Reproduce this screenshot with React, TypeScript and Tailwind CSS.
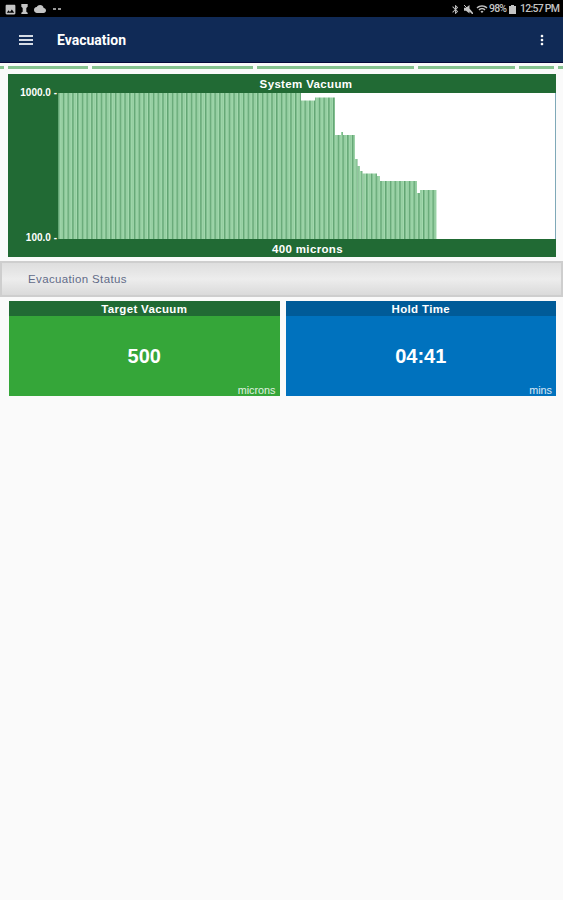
import { MdImage, MdCloud, MdBluetooth, MdWifi, MdMoreVert } from "react-icons/md";

type Step = { from: number; to: number; top: number };

// plot coordinates: 498 x 146, origin at the 1000 micron line
const STEPS: Step[] = [
  { from: 0, to: 243, top: 0 },
  { from: 243, to: 257, top: 7.5 },
  { from: 257, to: 277, top: 4.5 },
  { from: 277, to: 283, top: 42 },
  { from: 283, to: 285, top: 39 },
  { from: 285, to: 297, top: 42 },
  { from: 297, to: 299.5, top: 66 },
  { from: 299.5, to: 302, top: 73 },
  { from: 302, to: 304.5, top: 78 },
  { from: 304.5, to: 319, top: 80.5 },
  { from: 319, to: 322, top: 83 },
  { from: 322, to: 359, top: 88 },
  { from: 359, to: 362, top: 100 },
  { from: 362, to: 378.5, top: 97 },
];

const StatusBar = () => (
  <div className="flex h-[17px] items-center justify-between bg-black pt-px pr-[5px] pl-1 text-[#c4c4c4]">
    <div className="flex items-center gap-[2px]">
      <MdImage className="size-[13px]" />
      <svg className="h-[10px] w-[11px]" viewBox="0 0 11 11" fill="currentColor">
        <path d="M2 0h7v3L7.500 4.500v4l1.500 1V11H2V9.500l1.500-1v-4L2 3z" />
      </svg>
      <MdCloud className="ml-[2px] size-[12px]" />
      <span className="ml-[5px] flex gap-[2px]">
        <i className="h-[2px] w-[3px] bg-[#999]" />
        <i className="h-[2px] w-[3px] bg-[#999]" />
      </span>
    </div>
    <div className="flex items-center font-[Roboto,sans-serif] text-[10.5px] leading-none font-medium">
      <MdBluetooth className="size-[11px]" />
      <svg className="ml-[3px] size-[9px]" viewBox="0 0 9 9" fill="currentColor">
        <path d="M0 2.800h2L5.500 0v3.600L9 7.800 8 9 5.500 6.600V8.500L2 5.800H0z" />
        <path d="M0 0l9 9" stroke="currentColor" />
      </svg>
      <MdWifi className="ml-[3px] size-[12px]" />
      <span className="ml-px w-[18px] tracking-[-0.8px]">98%</span>
      <svg className="ml-[2px] h-[9px] w-[7px]" viewBox="0 0 7 9" fill="currentColor">
        <path d="M2 0h3v1h2v8H0V1h2z" />
      </svg>
      <span className="ml-[4px] w-[38px] tracking-[-0.75px] whitespace-nowrap">12:57 PM</span>
    </div>
  </div>
);

const AppBar = () => (
  <header className="flex h-[46px] items-center border-b border-[#07093c] bg-[#102a56] text-white">
    <div className="ml-[19px] flex w-[14px] flex-col gap-[2px]">
      <span className="h-[2px] bg-[#d5dbe5]" />
      <span className="h-[2px] bg-[#d5dbe5]" />
      <span className="h-[2px] bg-[#d5dbe5]" />
    </div>
    <h1 className="ml-[24px] flex-1 pt-px font-[Roboto,sans-serif] text-[14px] font-bold">Evacuation</h1>
    <MdMoreVert className="mr-[13px] size-4" />
  </header>
);

const PageStrips = () => (
  <div className="flex h-[11px] gap-1 pt-[3px]">
    <span className="h-[3px] w-1 bg-[#87c391]" />
    <span className="h-[3px] w-[80px] bg-[#87c391]" />
    <span className="h-[3px] w-[161px] bg-[#87c391]" />
    <span className="h-[3px] w-[157px] bg-[#87c391]" />
    <span className="h-[3px] w-[97px] bg-[#87c391]" />
    <span className="h-[3px] w-[35px] bg-[#87c391]" />
    <span className="h-[3px] flex-1 bg-[#87c391]" />
  </div>
);

const VacuumChart = () => (
  <section className="mr-[7px] ml-2 h-[183px] bg-[#216a34] text-white">
    <h2 className="h-[19px] pl-[48px] text-center text-[11.5px] leading-[20px] font-bold tracking-[0.35px]">System Vacuum</h2>
    <div className="flex h-[146px]">
      <div className="flex w-[50px] flex-col justify-between pr-px text-right text-[10px] leading-none font-bold">
        <span className="-mt-[5px]">1000.0 -</span>
        <span className="-mb-[4px]">100.0 -</span>
      </div>
      <svg className="h-[146px] w-[498px] bg-white" viewBox="0 0 498 146">
        <defs>
          <pattern id="bars" width="4.74" height="146" patternUnits="userSpaceOnUse">
            <rect width="4.74" height="146" fill="#a3d9ae" />
            <rect width="1.5" height="146" fill="#62a573" />
            <rect x="2.7" width=".6" height="146" fill="#86c394" />
          </pattern>
        </defs>
        {STEPS.map((s) => (
          <rect key={s.from} x={s.from} y={s.top} width={s.to - s.from} height={146 - s.top} fill="url(#bars)" />
        ))}
        <path d="M497.500 0V146" fill="none" stroke="#7fa9b8" />
      </svg>
    </div>
    <p className="pl-[51px] text-center text-[11.5px] leading-[20px] font-bold tracking-[0.35px]">400 microns</p>
  </section>
);

type TileProps = { title: string; value: string; unit: string; className: string; headClassName: string };

const Tile = ({ title, value, unit, className, headClassName }: TileProps) => (
  <div className={`flex h-[95px] flex-1 flex-col text-center text-white ${className}`}>
    <h3 className={`h-[15px] text-[11.5px] leading-[16px] font-bold tracking-[0.35px] ${headClassName}`}>{title}</h3>
    <p className="pt-[27px] text-[20px] leading-[27px] font-bold">{value}</p>
    <span className="mt-auto pr-1 text-right text-[10.8px] leading-[12px] text-white/85">{unit}</span>
  </div>
);

export default function App() {
  return (
    <main className="h-[900px] w-[563px] overflow-hidden bg-[#fafafa] font-['Liberation_Sans',sans-serif]">
      <StatusBar />
      <AppBar />
      <PageStrips />
      <VacuumChart />
      <div className="mt-[4px] flex h-[36px] items-center border-2 border-[#cecece] bg-linear-to-b from-[#dedede] via-[#ededed] to-[#dadada] pt-px pl-[26px] text-[11.5px] tracking-[0.36px] text-[#626b88]">
        Evacuation Status
      </div>
      <div className="mt-[4px] mr-[7px] ml-[9px] flex gap-[6px]">
        <Tile title="Target Vacuum" value="500" unit="microns" className="bg-[#35a639]" headClassName="bg-[#216a34]" />
        <Tile title="Hold Time" value="04:41" unit="mins" className="bg-[#0072be]" headClassName="bg-[#005b98]" />
      </div>
    </main>
  );
}
